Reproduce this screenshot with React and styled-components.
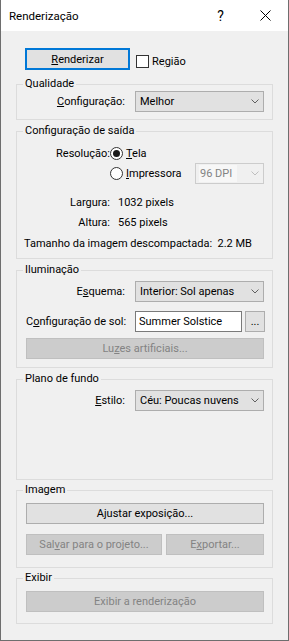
import React from 'react';
import styled, { createGlobalStyle } from 'styled-components';

const Global = createGlobalStyle`
  html, body {
    margin: 0;
    padding: 0;
    background: #ffffff;
  }
  body {
    font-family: "Segoe UI", Roboto, "Noto Sans", sans-serif;
    font-size: 11px;
    color: #000;
  }
`;

const Window = styled.div`
  width: 289px;
  height: 641px;
  box-sizing: border-box;
  border: 1px solid #6e6e6e;
  border-top: 0;
  background: #f0f0f0;
  display: flex;
  flex-direction: column;
`;

const TitleBar = styled.div`
  height: 31px;
  flex: none;
  background: #ffffff;
  display: flex;
  align-items: center;
  padding-left: 8px;
`;

const Title = styled.span`
  flex: 1;
  font-size: 11.5px;
`;

const TitleButton = styled.div`
  width: 46px;
  height: 31px;
  display: flex;
  align-items: center;
  justify-content: center;
  font-size: 14px;
  padding-left: ${(p) => p.$shift || 0}px;
  box-sizing: border-box;
`;

const Body = styled.div`
  display: flex;
  flex-direction: column;
  padding: 17px 15px 0 15px;
`;

const TopRow = styled.div`
  display: flex;
  align-items: center;
  height: 22px;
  padding-left: 9px;
`;

const DefaultButton = styled.div`
  width: 105px;
  height: 22px;
  box-sizing: border-box;
  border: 2px solid #0078d7;
  background: #e1e1e1;
  display: flex;
  align-items: center;
  justify-content: center;
`;

const CheckLabel = styled.label`
  display: flex;
  align-items: center;
  margin-left: 6px;
  gap: 3px;
  margin-top: 5px;
`;

const CheckBox = styled.span`
  width: 13px;
  height: 13px;
  box-sizing: border-box;
  border: 1px solid #333;
  background: #fff;
`;

const Key = styled.span`
  text-decoration: underline;
`;

const Group = styled.fieldset`
  margin: ${(p) => p.$mt}px 0 0;
  padding: 0 8px ${(p) => p.$pb}px 9px;
  border: 1px solid #dcdcdc;
  min-inline-size: 0;
  display: flex;
  flex-direction: column;
`;

const Caption = styled.legend`
  padding: 0 2px;
  margin-left: -3px;
  height: 14px;
  line-height: 14px;
`;

const Field = styled.div`
  display: grid;
  grid-template-columns: ${(p) => p.$label}px 1fr;
  column-gap: ${(p) => p.$gap || 0}px;
  align-items: center;
  height: ${(p) => p.$h}px;
  margin-top: ${(p) => p.$mt || 0}px;
`;

const Label = styled.span`
  text-align: right;
  white-space: nowrap;
`;

const Line = styled.div`
  height: 16px;
  line-height: 16px;
  white-space: nowrap;
  margin-top: ${(p) => p.$mt}px;
  margin-left: -2px;
`;

const Combo = styled.div`
  width: ${(p) => p.$w}px;
  height: 21px;
  box-sizing: border-box;
  border: 1px solid ${(p) => (p.$disabled ? '#cccccc' : '#adadad')};
  background: ${(p) => (p.$disabled ? '#f0f0f0' : '#e1e1e1')};
  color: ${(p) => (p.$disabled ? '#838383' : '#000')};
  display: flex;
  align-items: center;
  padding: 0 4px 0 3px;
  white-space: nowrap;
  margin-left: ${(p) => (p.$push ? 'auto' : '0')};
`;

const ComboValue = styled.span`
  flex: 1;
  align-self: stretch;
  display: flex;
  align-items: center;
  padding-left: 1px;
  margin: ${(p) => (p.$disabled ? '1px 14px 1px 0' : '0 6px 0 0')};
  background: ${(p) => (p.$disabled ? '#f7f7f7' : 'transparent')};
`;

const Chevron = ({ color }) => (
  <svg width="8" height="5" viewBox="0 0 8 5">
    <path d="M0.5 0.5 L4 4 L7.5 0.5" stroke={color} strokeWidth="1" fill="none" />
  </svg>
);

const Select = ({ value, width = 129, disabled, push }) => (
  <Combo $w={width} $disabled={disabled} $push={push}>
    <ComboValue $disabled={disabled}>{value}</ComboValue>
    <Chevron color={disabled ? '#bfbfbf' : '#606060'} />
  </Combo>
);

const RadioRow = styled.div`
  display: flex;
  align-items: center;
`;

const RadioOption = styled.label`
  display: flex;
  align-items: center;
  gap: 3px;
`;

const RadioCircle = styled.span`
  width: 13px;
  height: 13px;
  box-sizing: border-box;
  border: 1px solid #333;
  border-radius: 50%;
  background: #fff;
  display: flex;
  align-items: center;
  justify-content: center;
  &::after {
    content: '';
    width: 7px;
    height: 7px;
    border-radius: 50%;
    background: ${(p) => (p.$checked ? '#1a1a1a' : 'transparent')};
  }
`;

const Controls = styled.div`
  display: flex;
  align-items: center;
  gap: 3px;
`;

const TextBox = styled.div`
  width: 107px;
  height: 21px;
  box-sizing: border-box;
  border: 1px solid #7a7a7a;
  background: #fff;
  display: flex;
  align-items: center;
  padding-left: 3px;
`;

const Button = styled.div`
  height: ${(p) => p.$h || 21}px;
  width: ${(p) => (p.$w ? `${p.$w}px` : 'auto')};
  box-sizing: border-box;
  border: 1px solid ${(p) => (p.$disabled ? '#bfbfbf' : '#adadad')};
  background: ${(p) => (p.$disabled ? '#cccccc' : '#e1e1e1')};
  color: ${(p) => (p.$disabled ? '#838383' : '#000')};
  display: flex;
  align-items: center;
  justify-content: center;
  white-space: nowrap;
  margin-top: ${(p) => p.$mt || 0}px;
`;

const ButtonPair = styled.div`
  display: grid;
  grid-template-columns: 136px 1fr;
  column-gap: 4px;
  margin-top: ${(p) => p.$mt}px;
`;

const CloseIcon = () => (
  <svg width="11" height="11" viewBox="0 0 11 11">
    <path d="M0.5 0.5 L10.5 10.5 M10.5 0.5 L0.5 10.5" stroke="#000" strokeWidth="1" />
  </svg>
);

export default function App() {
  return (
    <>
      <Global />
      <Window>
        <TitleBar>
          <Title>Renderização</Title>
          <TitleButton $shift={3}>?</TitleButton>
          <TitleButton>
            <CloseIcon />
          </TitleButton>
        </TitleBar>
        <Body>
          <TopRow>
            <DefaultButton>
              <span>
                <Key>R</Key>enderizar
              </span>
            </DefaultButton>
            <CheckLabel>
              <CheckBox />
              <span>
                Re<Key>g</Key>ião
              </span>
            </CheckLabel>
          </TopRow>

          <Group $mt={7} $pb={7}>
            <Caption>Qualidade</Caption>
            <Field $label={99} $gap={10} $h={21}>
              <Label>
                <Key>C</Key>onfiguração:
              </Label>
              <Select value="Melhor" />
            </Field>
          </Group>

          <Group $mt={4} $pb={6}>
            <Caption>Configuração de saída</Caption>
            <Field $label={84} $h={20} $mt={5}>
              <Label>Resolução:</Label>
              <RadioOption>
                <RadioCircle $checked />
                <span>
                  <Key>T</Key>ela
                </span>
              </RadioOption>
            </Field>
            <Field $label={84} $h={21}>
              <span />
              <RadioRow>
                <RadioOption>
                  <RadioCircle />
                  <span>
                    <Key>I</Key>mpressora
                  </span>
                </RadioOption>
                <Select value="96 DPI" width={69} disabled push />
              </RadioRow>
            </Field>
            <Field $label={84} $gap={8} $h={16} $mt={10}>
              <Label>Largura:</Label>
              <span>1032 pixels</span>
            </Field>
            <Field $label={84} $gap={8} $h={16} $mt={4}>
              <Label>Altura:</Label>
              <span>565 pixels</span>
            </Field>
            <Line $mt={6}>Tamanho da imagem descompactada:&nbsp; 2.2 MB</Line>
          </Group>

          <Group $mt={4} $pb={8}>
            <Caption>Iluminação</Caption>
            <Field $label={99} $gap={10} $h={21} $mt={4}>
              <Label>
                E<Key>s</Key>quema:
              </Label>
              <Select value="Interior: Sol apenas" />
            </Field>
            <Field $label={99} $gap={10} $h={21} $mt={9}>
              <Label>
                C<Key>o</Key>nfiguração de sol:
              </Label>
              <Controls>
                <TextBox>Summer Solstice</TextBox>
                <Button $w={20}>...</Button>
              </Controls>
            </Field>
            <Button $disabled $mt={6}>
              <span>
                Lu<Key>z</Key>es artificiais...
              </span>
            </Button>
          </Group>

          <Group $mt={4} $pb={68}>
            <Caption>Plano de fundo</Caption>
            <Field $label={99} $gap={10} $h={21} $mt={4}>
              <Label>
                <Key>E</Key>stilo:
              </Label>
              <Select value="Céu: Poucas nuvens" />
            </Field>
          </Group>

          <Group $mt={3} $pb={12}>
            <Caption>Imagem</Caption>
            <Button $mt={6}>Ajustar exposição...</Button>
            <ButtonPair $mt={10}>
              <Button $disabled>
                <span>
                  Sal<Key>v</Key>ar para o projeto...
                </span>
              </Button>
              <Button $disabled>
                <span>
                  E<Key>x</Key>portar...
                </span>
              </Button>
            </ButtonPair>
          </Group>

          <Group $mt={3} $pb={11}>
            <Caption>Exibir</Caption>
            <Button $disabled $mt={6}>
              Exibir a renderização
            </Button>
          </Group>
        </Body>
      </Window>
    </>
  );
}
